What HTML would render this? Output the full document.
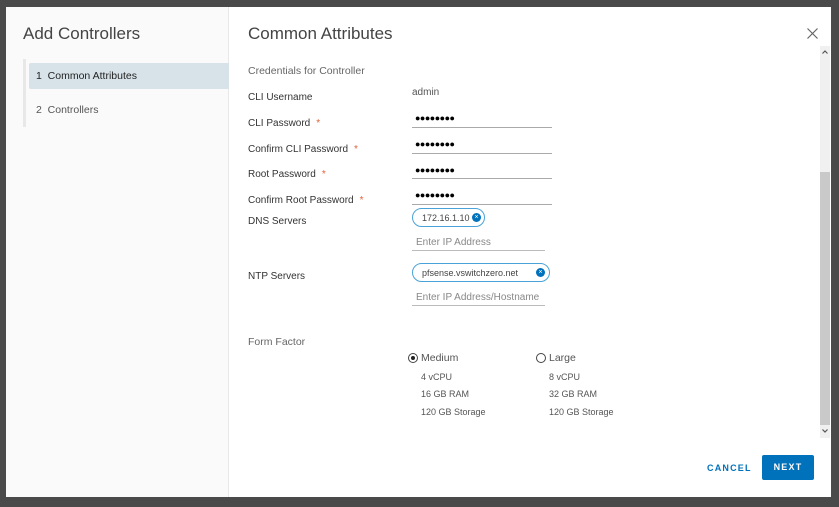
<!DOCTYPE html>
<html><head><style>
*{margin:0;padding:0;box-sizing:border-box}
body{width:839px;height:507px;background:#4a4a4a;font-family:"Liberation Sans",sans-serif;position:relative;overflow:hidden;color:#333}
.a{position:absolute;white-space:nowrap}
.modal{position:absolute;left:6px;top:7px;width:825px;height:490px;background:#fff}
.left{position:absolute;left:6px;top:7px;width:223px;height:490px;background:#fafafa;border-right:1px solid #e8e8e8}
.lbl{font-size:10px;color:#333}
.req{color:#e0623a;margin-left:6px}
.pw{font-size:9px;letter-spacing:-0.5px;color:#000}
.line{position:absolute;height:1px;background:#aaa}
.pill{position:absolute;height:19px;border:1px solid #49a3d9;border-radius:10px;font-size:9px;color:#444;padding:4px 0 0 9px;white-space:nowrap}
.x{position:absolute;width:9px;height:9px;border-radius:50%;background:#0072bb;color:#fff;font-size:7px;line-height:9px;text-align:center;top:4px}
.ph{font-size:10px;color:#888}
.sm{font-size:9px;color:#555}
</style></head><body>
<div class="modal"></div>
<div class="left"></div>
<div class="a" style="left:23px;top:24px;font-size:17px;color:#444">Add Controllers</div>
<div class="a" style="left:23px;top:59px;width:3px;height:68px;background:#e8e8e8"></div>
<div class="a" style="left:29px;top:63px;width:200px;height:26px;background:#d8e3e9;border-radius:2px 0 0 2px"></div>
<div class="a" style="left:36px;top:70px;font-size:10.5px;color:#222">1&nbsp; Common Attributes</div>
<div class="a" style="left:36px;top:104px;font-size:10.5px;color:#555">2&nbsp;&nbsp;Controllers</div>

<div class="a" style="left:248px;top:24px;font-size:17px;color:#444">Common Attributes</div>
<svg class="a" style="left:807px;top:28px" width="11" height="11"><path d="M0.5 0.5L10.5 10.5M10.5 0.5L0.5 10.5" stroke="#666" stroke-width="1.2"/></svg>
<div class="a" style="left:820px;top:46px;width:10px;height:392px;background:#f0f0f0"></div>
<div class="a" style="left:820px;top:172px;width:10px;height:253px;background:#c9c9c9"></div>
<svg class="a" style="left:822px;top:50px" width="6" height="4"><path d="M0.5 3.5L3 1L5.5 3.5" stroke="#555" fill="none" stroke-width="1.2"/></svg>
<svg class="a" style="left:822px;top:429px" width="6" height="4"><path d="M0.5 0.5L3 3L5.5 0.5" stroke="#555" fill="none" stroke-width="1.2"/></svg>

<div class="a" style="left:248px;top:65px;font-size:10.5px;color:#666">Credentials for Controller</div>
<div class="a lbl" style="left:248px;top:92px">CLI Username</div>
<div class="a lbl" style="left:248px;top:118px">CLI Password<span class="req">*</span></div>
<div class="a lbl" style="left:248px;top:144px">Confirm CLI Password<span class="req">*</span></div>
<div class="a lbl" style="left:248px;top:169px">Root Password<span class="req">*</span></div>
<div class="a lbl" style="left:248px;top:195px">Confirm Root Password<span class="req">*</span></div>
<div class="a lbl" style="left:248px;top:216px">DNS Servers</div>
<div class="a lbl" style="left:248px;top:271px">NTP Servers</div>

<div class="a" style="left:412px;top:87px;font-size:10px;color:#555">admin</div>
<div class="a pw" style="left:415px;top:113px">●●●●●●●●</div><div class="line" style="left:412px;top:127px;width:140px"></div>
<div class="a pw" style="left:415px;top:139px">●●●●●●●●</div><div class="line" style="left:412px;top:153px;width:140px"></div>
<div class="a pw" style="left:415px;top:165px">●●●●●●●●</div><div class="line" style="left:412px;top:178px;width:140px"></div>
<div class="a pw" style="left:415px;top:190px">●●●●●●●●</div><div class="line" style="left:412px;top:204px;width:140px"></div>

<div class="pill" style="left:412px;top:208px;width:73px">172.16.1.10<div class="x" style="left:59px">×</div></div>
<div class="a ph" style="left:416px;top:237px">Enter IP Address</div><div class="line" style="left:412px;top:250px;width:133px;background:#bbb"></div>
<div class="pill" style="left:412px;top:263px;width:138px">pfsense.vswitchzero.net<div class="x" style="left:123px">×</div></div>
<div class="a ph" style="left:416px;top:292px">Enter IP Address/Hostname</div><div class="line" style="left:412px;top:305px;width:133px;background:#bbb"></div>

<div class="a" style="left:248px;top:336px;font-size:10.5px;color:#666">Form Factor</div>
<div class="a" style="left:408px;top:353px;width:10px;height:10px;border:1px solid #444;border-radius:50%"><div style="position:absolute;left:2px;top:2px;width:4px;height:4px;border-radius:50%;background:#222"></div></div>
<div class="a" style="left:421px;top:352px;font-size:10.5px;color:#555">Medium</div>
<div class="a" style="left:536px;top:353px;width:10px;height:10px;border:1px solid #444;border-radius:50%"></div>
<div class="a" style="left:549px;top:352px;font-size:10.5px;color:#555">Large</div>
<div class="a sm" style="left:421px;top:372px">4 vCPU</div>
<div class="a sm" style="left:421px;top:389px">16 GB RAM</div>
<div class="a sm" style="left:421px;top:407px">120 GB Storage</div>
<div class="a sm" style="left:549px;top:372px">8 vCPU</div>
<div class="a sm" style="left:549px;top:389px">32 GB RAM</div>
<div class="a sm" style="left:549px;top:407px">120 GB Storage</div>

<div class="a" style="left:707px;top:463px;font-size:9px;color:#0072bb;font-weight:bold;letter-spacing:1.2px">CANCEL</div>
<div class="a" style="left:762px;top:455px;width:52px;height:25px;background:#0072bb;border-radius:2px;color:#fff;font-size:9px;font-weight:bold;letter-spacing:1.2px;text-align:center;line-height:25px">NEXT</div>
</body></html>
